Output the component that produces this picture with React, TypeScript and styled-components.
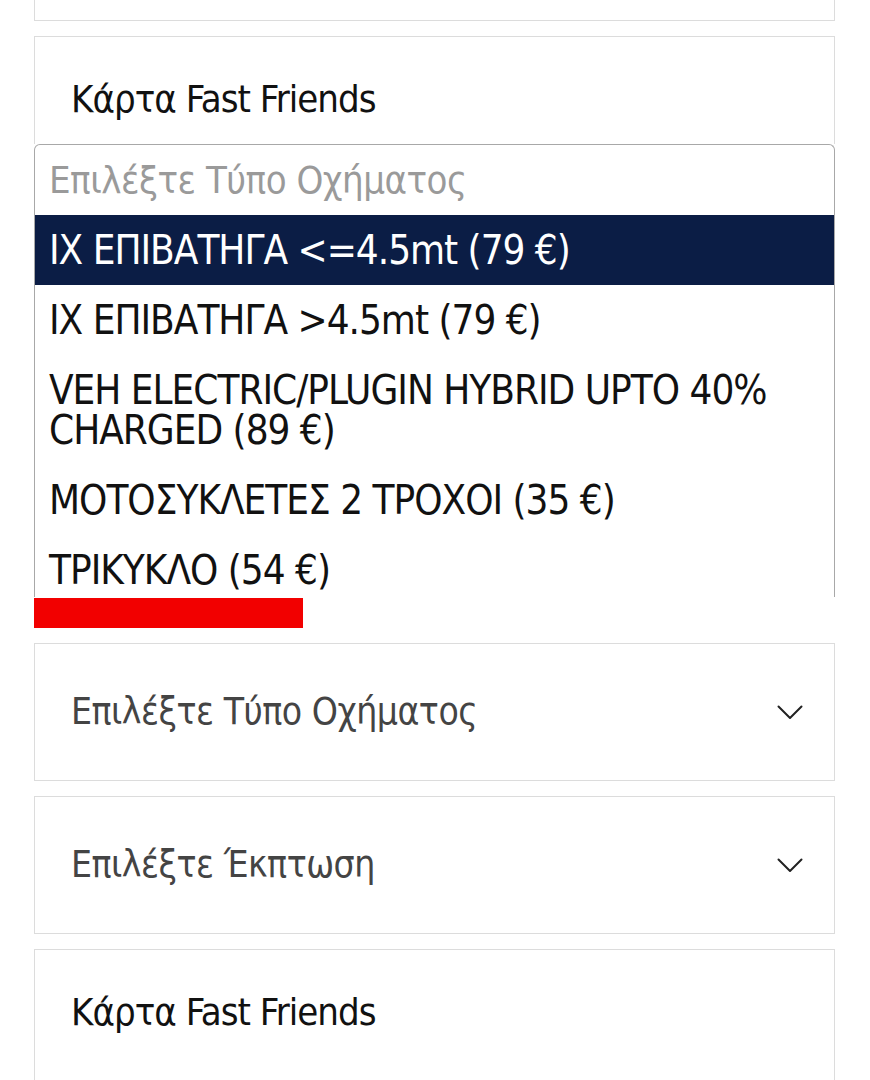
import React from 'react';
import styled, { createGlobalStyle } from 'styled-components';

const GlobalStyle = createGlobalStyle`
  html, body {
    margin: 0;
    padding: 0;
    background: #ffffff;
  }
  body {
    font-family: "Liberation Sans Narrow", "DejaVu Sans Condensed", "Liberation Sans", sans-serif;
    color: #111111;
    overflow: hidden;
  }
`;

const Page = styled.div`
  width: 801px;
  margin-left: 34px;
  display: flex;
  flex-direction: column;
  gap: 15px;
`;

const CutCard = styled.div`
  height: 20px;
  border: 1px solid #dcdcdc;
  border-top: none;
`;

const OpenField = styled.div`
  display: flex;
  flex-direction: column;
`;

const TitleCard = styled.div<{ $open?: boolean }>`
  border: 1px solid #dcdcdc;
  border-bottom: ${({ $open }) => ($open ? 'none' : '1px solid #dcdcdc')};
  height: ${({ $open }) => ($open ? '108px' : '138px')};
  padding: 40px 36px 0;
  box-sizing: border-box;
`;

const Title = styled.div`
  font-size: 38px;
  line-height: 44px;
  letter-spacing: -1px;
  color: #111111;
`;

const Listbox = styled.ul`
  list-style: none;
  margin: 0;
  padding: 0;
  height: 453px;
  overflow: hidden;
  border: 1px solid #a8a8a8;
  border-bottom: none;
  border-radius: 6px 6px 0 0;
  background: #ffffff;
  box-sizing: border-box;
`;

const Option = styled.li<{ $selected?: boolean; $placeholder?: boolean }>`
  padding: 15px 14px;
  font-size: ${({ $placeholder }) => ($placeholder ? '38px' : '40px')};
  letter-spacing: ${({ $placeholder }) => ($placeholder ? '-0.5px' : '-1px')};
  line-height: 40px;
  background: ${({ $selected }) => ($selected ? '#0b1d45' : 'transparent')};
  color: ${({ $selected, $placeholder }) =>
    $selected ? '#ffffff' : $placeholder ? '#9a9a9a' : '#111111'};
`;

const RedactBar = styled.div`
  width: 269px;
  height: 30px;
  margin-top: 1px;
  background: #f20000;
`;

const SelectCard = styled.div`
  height: 138px;
  box-sizing: border-box;
  border: 1px solid #dcdcdc;
  padding: 0 31px 0 36px;
  display: flex;
  align-items: center;
  justify-content: space-between;
`;

const SelectLabel = styled.span`
  font-size: 37px;
  line-height: 44px;
  letter-spacing: -0.5px;
  color: #444444;
`;

const Chevron = () => (
  <svg width="26" height="15" viewBox="0 0 26 15" fill="none">
    <path d="M1.5 1.5 L13 13 L24.5 1.5" stroke="#222" strokeWidth="2" strokeLinecap="round" strokeLinejoin="round" />
  </svg>
);

const options = [
  'ΙΧ ΕΠΙΒΑΤΗΓΑ <=4.5mt (79 €)',
  'ΙΧ ΕΠΙΒΑΤΗΓΑ >4.5mt (79 €)',
  'VEH ELECTRIC/PLUGIN HYBRID UPTO 40% CHARGED (89 €)',
  'ΜΟΤΟΣΥΚΛΕΤΕΣ 2 ΤΡΟΧΟΙ (35 €)',
  'ΤΡΙΚΥΚΛΟ (54 €)',
];

const App: React.FC = () => {
  return (
    <>
      <GlobalStyle />
      <Page>
        <CutCard />

        <OpenField>
          <TitleCard $open>
            <Title>Κάρτα Fast Friends</Title>
          </TitleCard>
          <Listbox>
            <Option $placeholder>Επιλέξτε Τύπο Οχήματος</Option>
            {options.map((opt, i) => (
              <Option key={opt} $selected={i === 0}>
                {opt}
              </Option>
            ))}
          </Listbox>
          <RedactBar />
        </OpenField>

        <SelectCard>
          <SelectLabel>Επιλέξτε Τύπο Οχήματος</SelectLabel>
          <Chevron />
        </SelectCard>

        <SelectCard>
          <SelectLabel>Επιλέξτε Έκπτωση</SelectLabel>
          <Chevron />
        </SelectCard>

        <TitleCard>
          <Title>Κάρτα Fast Friends</Title>
        </TitleCard>
      </Page>
    </>
  );
};

export default App;
